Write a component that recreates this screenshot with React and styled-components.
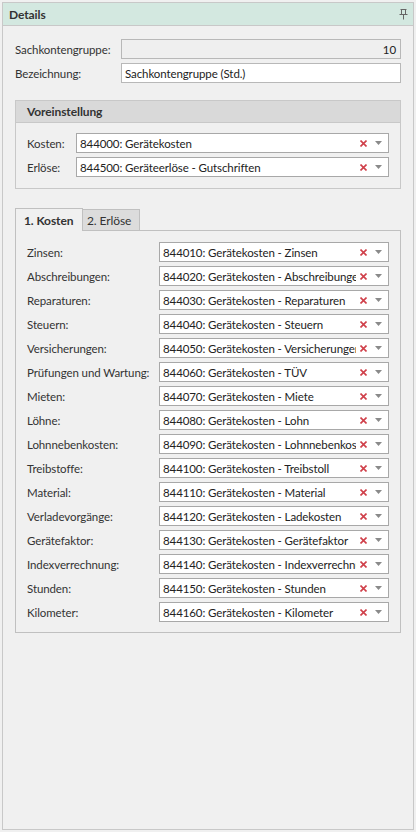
import React from "react";
import styled, { createGlobalStyle } from "styled-components";

const GlobalStyle = createGlobalStyle`
  * { box-sizing: border-box; }
  body {
    margin: 0;
    padding: 2px;
    background: #f0f0f0;
    font-family: "Segoe UI", Lato, "Liberation Sans", sans-serif;
    font-size: 11.5px;
    letter-spacing: -0.1px;
    color: #333;
  }
`;

const kostenRows = [
  ["Zinsen:", "844010: Gerätekosten - Zinsen"],
  ["Abschreibungen:", "844020: Gerätekosten - Abschreibungen"],
  ["Reparaturen:", "844030: Gerätekosten - Reparaturen"],
  ["Steuern:", "844040: Gerätekosten - Steuern"],
  ["Versicherungen:", "844050: Gerätekosten - Versicherungen"],
  ["Prüfungen und Wartung:", "844060: Gerätekosten - TÜV"],
  ["Mieten:", "844070: Gerätekosten - Miete"],
  ["Löhne:", "844080: Gerätekosten - Lohn"],
  ["Lohnnebenkosten:", "844090: Gerätekosten - Lohnnebenkosten"],
  ["Treibstoffe:", "844100: Gerätekosten - Treibstoll"],
  ["Material:", "844110: Gerätekosten - Material"],
  ["Verladevorgänge:", "844120: Gerätekosten - Ladekosten"],
  ["Gerätefaktor:", "844130: Gerätekosten - Gerätefaktor"],
  ["Indexverrechnung:", "844140: Gerätekosten - Indexverrechnung"],
  ["Stunden:", "844150: Gerätekosten - Stunden"],
  ["Kilometer:", "844160: Gerätekosten - Kilometer"],
];

const Panel = styled.div`
  width: 412px;
  height: 828px;
  border: 1px solid #c8c8c8;
  background: #f0f0f0;
  display: flex;
  flex-direction: column;
`;

const Header = styled.div`
  height: 23px;
  background: #d3e8e0;
  border-bottom: 1px solid #c8c8c8;
  display: flex;
  align-items: center;
  justify-content: space-between;
  padding: 0 5px 0 6px;
  font-weight: bold;
  font-size: 12px;
  color: #333;
`;

const Body = styled.div`
  padding: 13px 12px 0 12px;
  display: flex;
  flex-direction: column;
`;

const Rows = styled.div`
  display: flex;
  flex-direction: column;
  gap: 4px;
`;

const Row = styled.div`
  display: flex;
  align-items: center;
  height: 20px;
`;

const Label = styled.div`
  width: ${(p) => p.$w}px;
  flex: none;
  white-space: nowrap;
`;

const TextBox = styled.div`
  flex: 1;
  height: 20px;
  border: 1px solid #b8b8b8;
  background: ${(p) => (p.$readonly ? "#efefef" : "#fff")};
  color: #222;
  display: flex;
  align-items: center;
  justify-content: ${(p) => (p.$right ? "flex-end" : "flex-start")};
  padding: 0 4px 0 3px;
  white-space: nowrap;
  overflow: hidden;
`;

const Combo = styled.div`
  flex: 1;
  min-width: 0;
  height: 20px;
  border: 1px solid #a8a8a8;
  background: #fff;
  display: flex;
  align-items: center;
  color: #222;
`;

const ComboText = styled.div`
  flex: 1;
  min-width: 0;
  padding-left: 3px;
  white-space: nowrap;
  overflow: hidden;
`;

const ComboButtons = styled.div`
  flex: none;
  display: flex;
  align-items: center;
  gap: 8px;
  padding: 0 6px 0 4px;
`;

const Group = styled.div`
  margin-top: 17px;
  border: 1px solid #c8c8c8;
`;

const GroupHeader = styled.div`
  height: 22px;
  background: #d9d9d9;
  border-bottom: 1px solid #c8c8c8;
  display: flex;
  align-items: center;
  padding-left: 11px;
  font-weight: bold;
  font-size: 12px;
  color: #333;
`;

const GroupBody = styled.div`
  padding: 10px 11px 11px 11px;
`;

const Tabs = styled.div`
  margin-top: 18px;
  display: flex;
  align-items: flex-end;
  height: 23px;
`;

const Tab = styled.div`
  height: ${(p) => (p.$active ? 23 : 21)}px;
  width: ${(p) => (p.$active ? 68 : 58)}px;
  padding-left: ${(p) => (p.$active ? 8 : 4)}px;
  display: flex;
  align-items: center;
  border: 1px solid #c0c0c0;
  border-bottom: none;
  margin-left: ${(p) => (p.$active ? 0 : -1)}px;
  background: ${(p) => (p.$active ? "#f0f0f0" : "#dcdcdc")};
  font-weight: ${(p) => (p.$active ? "bold" : "normal")};
  font-size: 12px;
  position: relative;
  z-index: ${(p) => (p.$active ? 1 : 0)};
  margin-bottom: ${(p) => (p.$active ? -1 : 0)}px;
`;

const TabPanel = styled.div`
  border: 1px solid #c0c0c0;
  padding: 11px 11px 10px 11px;
`;

const Pin = () => (
  <svg width="9" height="11" viewBox="0 0 9 11">
    <path d="M1.5 0.5h6M2.5 0.5v5M6.5 0.5v5M0.5 5.5h8M4.5 5.5v5" stroke="#666" strokeWidth="1" fill="none" />
  </svg>
);

const ClearIcon = () => (
  <svg width="7" height="7" viewBox="0 0 7 7">
    <path d="M0.5 0.5L6.5 6.5M6.5 0.5L0.5 6.5" stroke="#d0404a" strokeWidth="1.6" />
  </svg>
);

const DropIcon = () => (
  <svg width="7" height="4" viewBox="0 0 7 4">
    <path d="M0 0h7L3.5 4z" fill="#8a8a8a" />
  </svg>
);

const ComboBox = ({ value }) => (
  <Combo>
    <ComboText>{value}</ComboText>
    <ComboButtons>
      <ClearIcon />
      <DropIcon />
    </ComboButtons>
  </Combo>
);

export default function App() {
  return (
    <>
      <GlobalStyle />
      <Panel>
        <Header>
          <span>Details</span>
          <Pin />
        </Header>
        <Body>
          <Rows>
            <Row>
              <Label $w={106}>Sachkontengruppe:</Label>
              <TextBox $readonly $right>10</TextBox>
            </Row>
            <Row>
              <Label $w={106}>Bezeichnung:</Label>
              <TextBox>Sachkontengruppe (Std.)</TextBox>
            </Row>
          </Rows>

          <Group>
            <GroupHeader>Voreinstellung</GroupHeader>
            <GroupBody>
              <Rows>
                <Row>
                  <Label $w={49}>Kosten:</Label>
                  <ComboBox value="844000: Gerätekosten" />
                </Row>
                <Row>
                  <Label $w={49}>Erlöse:</Label>
                  <ComboBox value="844500: Geräteerlöse - Gutschriften" />
                </Row>
              </Rows>
            </GroupBody>
          </Group>

          <Tabs>
            <Tab $active>1. Kosten</Tab>
            <Tab>2. Erlöse</Tab>
          </Tabs>
          <TabPanel>
            <Rows>
              {kostenRows.map(([label, value]) => (
                <Row key={label}>
                  <Label $w={132}>{label}</Label>
                  <ComboBox value={value} />
                </Row>
              ))}
            </Rows>
          </TabPanel>
        </Body>
      </Panel>
    </>
  );
}
